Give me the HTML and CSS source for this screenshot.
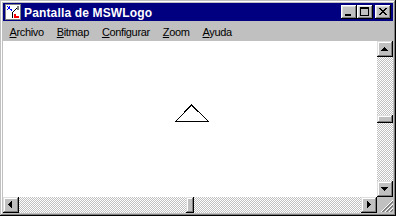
FILE: index.html
```html
<!DOCTYPE html>
<html lang="es">
<head>
<meta charset="utf-8">
<title>Pantalla de MSWLogo</title>
<link rel="stylesheet" href="styles.css">
</head>
<body>
<div class="window">
  <div class="titlebar">
    <svg class="app-icon" viewBox="0 0 16 16" shape-rendering="crispEdges">
      <rect x="0" y="0" width="16" height="16" fill="#808080"/>
      <rect x="1" y="1" width="14" height="14" fill="#fff"/>
      <rect x="2" y="2" width="1" height="1" fill="#0000ff"/>
      <rect x="4" y="2" width="1" height="1" fill="#0000ff"/>
      <rect x="3" y="3" width="2" height="2" fill="#0000ff"/>
      <rect x="2" y="5" width="1" height="1" fill="#0000ff"/>
      <rect x="5" y="5" width="2" height="1" fill="#0000ff"/>
      <rect x="6" y="6" width="1" height="1" fill="#0000ff"/>
      <path d="M7 8h1v-1h1v-1h1v-1h1v-1h1v-1h1v-1h1v1h-1v1h-1v1h-1v1h-1v1h-1v1h-1v1h-1z" fill="#000"/>
      <rect x="12" y="2" width="2" height="4" fill="#808080"/>
      <rect x="9" y="10" width="5" height="4" fill="#ff0000"/>
      <rect x="11" y="10" width="3" height="2" fill="#fff"/>
      <rect x="7" y="9" width="1" height="5" fill="#000"/>
    </svg>
    <span class="title">Pantalla de MSWLogo</span>
    <div class="caption-buttons">
      <button class="cbtn" aria-label="Minimizar">
        <svg width="16" height="14" viewBox="0 0 16 14" shape-rendering="crispEdges"><rect x="4" y="9" width="6" height="2" fill="#000"/></svg>
      </button>
      <button class="cbtn" aria-label="Maximizar">
        <svg width="16" height="14" viewBox="0 0 16 14" shape-rendering="crispEdges"><path d="M3 2h9v9h-9z M4 4v6h7v-6z" fill="#000" fill-rule="evenodd"/></svg>
      </button>
      <button class="cbtn close" aria-label="Cerrar">
        <svg width="16" height="14" viewBox="0 0 16 14" shape-rendering="crispEdges">
          <g fill="#000">
            <rect x="4" y="3" width="2" height="1"/><rect x="10" y="3" width="2" height="1"/>
            <rect x="5" y="4" width="2" height="1"/><rect x="9" y="4" width="2" height="1"/>
            <rect x="6" y="5" width="4" height="1"/>
            <rect x="7" y="6" width="2" height="1"/>
            <rect x="6" y="7" width="4" height="1"/>
            <rect x="5" y="8" width="2" height="1"/><rect x="9" y="8" width="2" height="1"/>
            <rect x="4" y="9" width="2" height="1"/><rect x="10" y="9" width="2" height="1"/>
          </g>
        </svg>
      </button>
    </div>
  </div>
  <div class="menubar">
    <span class="menu-item"><u>A</u>rchivo</span>
    <span class="menu-item"><u>B</u>itmap</span>
    <span class="menu-item"><u>C</u>onfigurar</span>
    <span class="menu-item"><u>Z</u>oom</span>
    <span class="menu-item"><u>A</u>yuda</span>
  </div>
  <div class="client">
    <div class="canvas">
      <svg class="drawing" viewBox="0 0 374 156" shape-rendering="crispEdges">
        <polygon points="188.5,64 172.5,80.5 205.5,80.5" fill="none" stroke="#000" stroke-width="1"/>
      </svg>
    </div>
    <div class="vscroll">
      <div class="sbtn">
        <svg width="16" height="16" viewBox="0 0 16 16" shape-rendering="crispEdges"><path d="M7 6h1v1h1v1h1v1h1v1h-7v-1h1v-1h1v-1h1z" fill="#000"/></svg>
      </div>
      <div class="track vtrack"><div class="thumb vthumb"></div></div>
      <div class="sbtn">
        <svg width="16" height="16" viewBox="0 0 16 16" shape-rendering="crispEdges"><path d="M4 6h7v1h-1v1h-1v1h-1v1h-1v-1h-1v-1h-1v-1h-1z" fill="#000"/></svg>
      </div>
    </div>
    <div class="hscroll">
      <div class="sbtn">
        <svg width="16" height="16" viewBox="0 0 16 16" shape-rendering="crispEdges"><path d="M8 4h1v7h-1v-1h-1v-1h-1v-1h-1v-1h1v-1h1v-1h1z" fill="#000"/></svg>
      </div>
      <div class="track htrack"><div class="thumb hthumb"></div></div>
      <div class="sbtn">
        <svg width="16" height="16" viewBox="0 0 16 16" shape-rendering="crispEdges"><path d="M6 4h1v1h1v1h1v1h1v1h-1v1h-1v1h-1v1h-1z" fill="#000"/></svg>
      </div>
    </div>
    <div class="grip">
      <svg width="16" height="16" viewBox="0 0 16 16" shape-rendering="crispEdges">
        <g stroke-width="1">
          <path d="M3.5 15.5L15.5 3.5" stroke="#fff"/>
          <path d="M4.5 15.5L15.5 4.5" stroke="#808080"/>
          <path d="M5.5 15.5L15.5 5.5" stroke="#808080"/>
          <path d="M7.5 15.5L15.5 7.5" stroke="#fff"/>
          <path d="M8.5 15.5L15.5 8.5" stroke="#808080"/>
          <path d="M9.5 15.5L15.5 9.5" stroke="#808080"/>
          <path d="M11.5 15.5L15.5 11.5" stroke="#fff"/>
          <path d="M12.5 15.5L15.5 12.5" stroke="#808080"/>
          <path d="M13.5 15.5L15.5 13.5" stroke="#808080"/>
        </g>
      </svg>
    </div>
  </div>
</div>
</body>
</html>
```

FILE: styles.css
```css
* {
  box-sizing: border-box;
}

html,
body {
  margin: 0;
  padding: 0;
}

body {
  width: 396px;
  height: 216px;
  overflow: hidden;
  background: #c0c0c0;
  font-family: "Liberation Sans", Arial, sans-serif;
}

.window {
  width: 396px;
  height: 216px;
  padding: 3px;
  background: #c0c0c0;
  box-shadow:
    inset -1px -1px #000,
    inset 1px 1px #c0c0c0,
    inset -2px -2px #808080,
    inset 2px 2px #fff;
  display: flex;
  flex-direction: column;
}

.titlebar {
  height: 18px;
  flex: none;
  background: #000080;
  color: #fff;
  display: flex;
  align-items: center;
  padding-left: 2px;
}

.app-icon {
  width: 16px;
  height: 16px;
  flex: none;
  display: block;
}

.title {
  flex: 1;
  margin-left: 3px;
  font-size: 12px;
  font-weight: bold;
  letter-spacing: 0.15px;
  line-height: 18px;
  padding-top: 1px;
  white-space: nowrap;
}

.caption-buttons {
  display: flex;
  padding-right: 2px;
}

.cbtn {
  width: 16px;
  height: 14px;
  padding: 0;
  border: 0;
  background: #c0c0c0;
  box-shadow:
    inset -1px -1px #000,
    inset 1px 1px #fff,
    inset -2px -2px #808080,
    inset 2px 2px #dfdfdf;
  display: block;
}

.cbtn svg {
  display: block;
}

.cbtn.close {
  margin-left: 2px;
}

.menubar {
  height: 20px;
  flex: none;
  display: flex;
  padding-top: 2px;
  font-size: 11px;
  line-height: 18px;
  letter-spacing: -0.35px;
  color: #000;
}

.menu-item {
  padding: 0 6.5px;
  white-space: nowrap;
}

.menu-item u {
  text-decoration-thickness: 1px;
  text-underline-offset: 1px;
}

.client {
  flex: 1;
  display: grid;
  grid-template-columns: 1fr 16px;
  grid-template-rows: 1fr 16px;
  min-height: 0;
}

.canvas {
  background: #fff;
  overflow: hidden;
}

.drawing {
  display: block;
  width: 100%;
  height: 100%;
}

.vscroll {
  display: flex;
  flex-direction: column;
}

.hscroll {
  display: flex;
}

.sbtn {
  width: 16px;
  height: 16px;
  flex: none;
  background: #c0c0c0;
  box-shadow:
    inset -1px -1px #000,
    inset 1px 1px #dfdfdf,
    inset -2px -2px #808080,
    inset 2px 2px #fff;
}

.sbtn svg {
  display: block;
}

.track {
  flex: 1;
  display: flex;
  align-items: center;
  justify-content: center;
  background-color: #fff;
  background-image: conic-gradient(#c0c0c0 25%, transparent 0 50%, #c0c0c0 0 75%, transparent 0);
  background-size: 2px 2px;
}

.vtrack {
  flex-direction: column;
}

.thumb {
  background: #c0c0c0;
  box-shadow:
    inset -1px -1px #000,
    inset 1px 1px #dfdfdf,
    inset -2px -2px #808080,
    inset 2px 2px #fff;
}

.vthumb {
  width: 16px;
  height: 8px;
}

.hthumb {
  width: 8px;
  height: 16px;
}

.grip {
  background: #c0c0c0;
}

.grip svg {
  display: block;
}
```
